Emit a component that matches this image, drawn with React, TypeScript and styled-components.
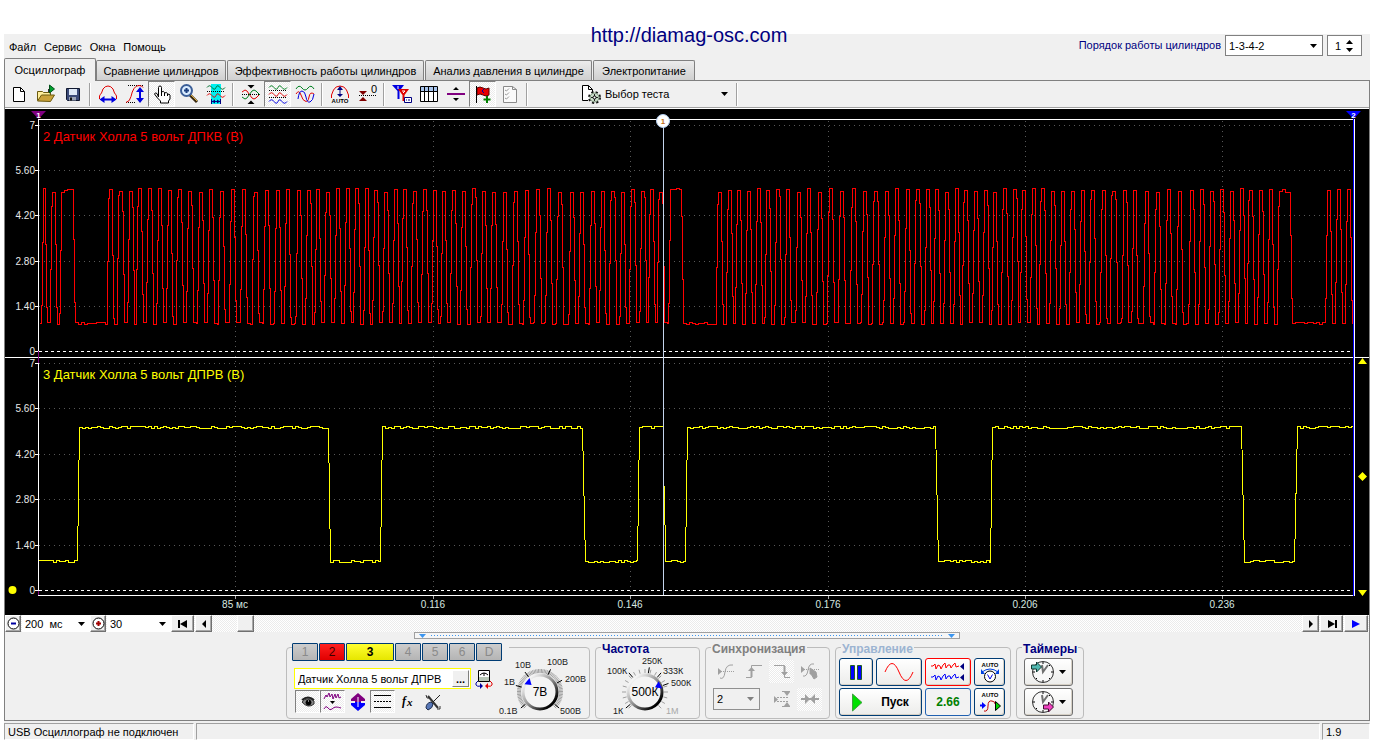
import React from "react";
import styled, { createGlobalStyle, css } from "styled-components";

const FACE = "#f0f0f0";
const NAVY = "#000080";
const UI = '"Liberation Sans", Arial, sans-serif';

const dither = css`
  background: repeating-conic-gradient(#ffffff 0% 25%, #ebebeb 0% 50%) 0 0 / 2px 2px;
`;

const Global = createGlobalStyle`
  *, *::before, *::after { box-sizing: border-box; }
  body { margin: 0; background: #fff; font: 11px/14px ${UI}; color: #000; }
  button, input, select { font: inherit; color: inherit; margin: 0; padding: 0; border-radius: 0; }
  svg { display: block; }
`;

/* ---------- window frame ---------- */

const Window = styled.main`
  position: relative;
  padding: 34px 12px 4px 4px;
`;

const SiteLink = styled.a`
  position: absolute;
  top: 23px;
  left: 0;
  right: 4px;
  margin: 0 auto;
  width: max-content;
  font-size: 20px;
  line-height: 24px;
  color: ${NAVY};
  text-decoration: none;
`;

const Header = styled.header`
  display: flex;
  justify-content: space-between;
  height: 24px;
  padding: 1px 8px 0 5px;
  background: ${FACE};
`;

const Menu = styled.nav`
  display: flex;
  gap: 8px;
  padding-top: 5px;
`;

const MenuItem = styled.a`
  color: #000;
  text-decoration: none;
`;

const OrderBar = styled.div`
  display: flex;
  gap: 4px;
  height: 21px;
`;

const OrderLabel = styled.label`
  color: ${NAVY};
  line-height: 21px;
`;

const Tabs = styled.div`
  display: flex;
  align-items: flex-end;
  gap: 1px;
  height: 22px;
  background: ${FACE};
`;

const Tab = styled.button<{ $w: number; $active?: boolean }>`
  width: ${(p) => p.$w}px;
  height: ${(p) => (p.$active ? 23 : 20)}px;
  margin-bottom: ${(p) => (p.$active ? -1 : 0)}px;
  margin-right: ${(p) => (p.$active ? -1 : 0)}px;
  border: 1px solid #808080;
  border-bottom: 0;
  border-radius: 2px 2px 0 0;
  background: ${(p) => (p.$active ? FACE : "linear-gradient(#ececec, #cfcfcf)")};
  white-space: nowrap;
  z-index: 1;
`;

const Panel = styled.section`
  border: 1px solid #808080;
  background: ${FACE};
`;

/* ---------- toolbar ---------- */

const Toolbar = styled.div`
  display: flex;
  align-items: center;
  height: 28px;
  border-bottom: 1px solid #fff;
  box-shadow: inset 0 -1px #a0a0a0;
  padding-bottom: 1px;
`;

const Tool = styled.button<{ $down?: boolean }>`
  display: grid;
  place-items: center;
  width: 27px;
  height: 26px;
  border: 1px solid transparent;
  background: none;
  ${(p) =>
    p.$down &&
    css`
      ${dither}
      border-color: #808080 #fff #fff #808080;
    `}
`;

const Sep = styled.i`
  width: 2px;
  height: 23px;
  margin: 0 3px;
  border-left: 1px solid #a0a0a0;
  border-right: 1px solid #fff;
`;

const TestPicker = styled.div`
  display: flex;
  align-items: center;
  gap: 1px;
  padding-left: 50px;
`;

/* ---------- drop-downs ---------- */

const SelectBox = styled.span<{ $w: number; $frame?: string; $bg?: string; $h?: number }>`
  display: flex;
  align-items: center;
  width: ${(p) => p.$w}px;
  height: ${(p) => p.$h ?? 21}px;
  padding-right: 5px;
  border: ${(p) => (p.$frame ? `1px solid ${p.$frame}` : 0)};
  background: ${(p) => p.$bg ?? "#fff"};
  select {
    flex: 1;
    min-width: 0;
    height: 100%;
    padding-left: 3px;
    border: 0;
    background: none;
    appearance: none;
  }
`;

const Caret = ({ up, color = "#000" }: { up?: boolean; color?: string }) => (
  <svg width="7" height="4" viewBox="0 0 7 4" aria-hidden="true">
    <path d={up ? "M0 4h7L3.500 0z" : "M0 0h7L3.500 4z"} fill={color} />
  </svg>
);

type DropProps = { id?: string; label?: string; w: number; h?: number; value: string; frame?: string; bg?: string; caret?: string };
const Drop = ({ id, label, w, h, value, frame, bg, caret }: DropProps) => (
  <SelectBox $w={w} $h={h} $frame={frame} $bg={bg}>
    <select id={id} aria-label={label} defaultValue={value}>
      <option value={value}>{value}</option>
    </select>
    <Caret color={caret} />
  </SelectBox>
);

const Spinner = styled.span`
  display: flex;
  align-items: center;
  width: 35px;
  height: 21px;
  border: 1px solid #808080;
  background: #fff;
  input {
    width: 18px;
    padding-left: 7px;
    border: 0;
    background: none;
    outline: 0;
  }
`;

const SpinButtons = styled.span`
  display: grid;
  gap: 4px;
  button {
    height: 4px;
    border: 0;
    background: none;
  }
`;

/* ---------- icons ---------- */

const Ico = ({ w = 20, h = 20, children }: { w?: number; h?: number; children: React.ReactNode }) => (
  <svg width={w} height={h} viewBox={`0 0 ${w} ${h}`} fill="none" stroke="#000" overflow="visible" aria-hidden="true">
    {children}
  </svg>
);

const iconFont = { fontFamily: UI, fontWeight: 700, fontSize: 6 };

const Mesh = ({ y, c }: { y: number; c: string }) => (
  <path d={`M1 ${y + 1.5}q2.500-3.500 5 0t4 0t4 0t5 0`} stroke={c} />
);

const NewIcon = () => (
  <Ico>
    <path d="M4.500 3.500h7l4 4v10h-11z" fill="#fff" />
    <path d="M11.500 3.500v4h4" />
  </Ico>
);
const OpenIcon = () => (
  <Ico>
    <path d="M1.500 16.500v-9h5l1 1h7v3" fill="#ffef9c" stroke="#6b5a10" />
    <path d="M1.500 17l4-6h13l-4 6.500z" fill="#c9a23a" stroke="#6b5a10" />
    <path d="M12.500 8V5" stroke="#303030" />
    <path d="M13.500 1v8l5-4z" fill="#00a030" stroke="#005018" />
  </Ico>
);
const SaveIcon = () => (
  <Ico>
    <path d="M3.500 4.500h13v12h-12l-1-1z" fill="#3b4a78" stroke="#101830" />
    <path d="M6 5h8v6H6z" fill="#dfe9f7" stroke="none" />
    <path d="M6 13h7v3.500H6z" fill="#9aa3b5" stroke="none" />
    <path d="M7 13.500h2v3H7z" fill="#111" stroke="none" />
  </Ico>
);
const WidthIcon = () => (
  <Ico>
    <path d="M1.500 15v-3q1-2 2-3l1.500-4q2-3 5-3t5 3l1.500 4q1 1 2 3v3" stroke="#e00000" />
    <path d="M4 15.500h12" stroke="#0000e0" strokeWidth="2" />
    <path d="M1.500 15.500l5-3.500v7zM18.500 15.500l-5-3.500v7z" fill="#0000e0" stroke="none" />
  </Ico>
);
const HeightIcon = () => (
  <Ico>
    <path d="M3 1.500h16M1 18.500h9" strokeDasharray="1 1" />
    <path d="M1 18.500q4-1 5-6t3-8q2-3 5-3t4 2" stroke="#e00000" />
    <path d="M15 6v10" stroke="#0000e0" strokeWidth="2" />
    <path d="M15 3l4 5h-8zM15 19l4-5h-8z" fill="#0000e0" stroke="none" />
  </Ico>
);
const HandIcon = () => (
  <Ico>
    <path
      d="M6.500 13V3.500q0-1.500 1.500-1.500t1.500 1.500V9V8q2-1.500 3 .500V9q2-1.200 3 .5v1q2-1 2.500.5v4l-1.500 2v2h-8v-2l-3-3-3-4q.5-2 2.500-.5z"
      fill="#fff"
    />
    <path d="M9.500 9v3M12.500 9v3M15.500 10v2" />
  </Ico>
);
const ZoomIcon = () => (
  <Ico>
    <path d="M11 11l7 7" stroke="#3a2a10" strokeWidth="3" />
    <path d="M12 11l6 6" stroke="#e0b040" />
    <circle cx="7.500" cy="6.500" r="5.500" fill="#d9ecff" stroke="#3c5f98" strokeWidth="2" />
    <path d="M5 6.500h5M7.500 4v5" stroke="#1c3f80" strokeWidth="2" />
  </Ico>
);
const BandIcon = () => (
  <Ico>
    <path d="M5 0h10v20H5z" fill="#00f0f0" stroke="none" />
    <Mesh y={2} c="#007030" />
    <path d="M1 7.500h18" strokeDasharray="1 1" />
    <Mesh y={10} c="#e00000" />
    <path d="M6 17.500h8M5.500 15v5M14.500 15v5" stroke="#000080" />
    <path d="M6 17.500l3-2v4zM14 17.500l-3-2v4z" fill="#000080" stroke="none" />
  </Ico>
);
const CrossIcon = () => (
  <Ico>
    <path d="M6.500 1h7L10 4.500zM6.500 20h7L10 16.500z" fill="#000" stroke="none" />
    <path d="M1 10.500h18" strokeDasharray="1 1" />
    <path d="M1 8l3-2q2 0 4 4l3 4q2 2 4 0l4-4" stroke="#e00000" />
    <path d="M1 13l3 2q2 0 4-4l3-4q2-2 4 0l4 4" stroke="#008020" />
  </Ico>
);
const TripleIcon = () => (
  <Ico>
    <Mesh y={2} c="#008020" />
    <path d="M1 6.500h18M1 13.500h18" strokeDasharray="1 1" />
    <Mesh y={9} c="#e00000" />
    <Mesh y={16} c="#0000e0" />
  </Ico>
);
const OverlayIcon = () => (
  <Ico>
    <path d="M1 5q3-5 6-1t6 0 6 1" stroke="#008020" />
    <path d="M1 10q3-5 5 1t4 6q3 2 4-4t5-3" stroke="#e00000" />
    <path d="M3 15q1-8 4-8t4 6t4 5 4-8" stroke="#0000e0" />
  </Ico>
);
const AutoIcon = () => (
  <Ico>
    <path d="M1.500 14v-3l2-5q2-4 6.500-4t6.500 4l2 5v3" stroke="#e00000" />
    <path d="M10 4v8" stroke="#000080" />
    <path d="M10 2l3 4H7zM10 13l3-3H7z" fill="#000080" stroke="none" />
    <text x="10" y="19" textAnchor="middle" fill="#000" stroke="none" {...iconFont}>AUTO</text>
  </Ico>
);
const ZeroIcon = () => (
  <Ico>
    <path d="M2 7h8L6 11zM2 17h8l-4-4z" fill="#800000" stroke="none" />
    <path d="M2 11.500h17" strokeDasharray="1 1" />
    <text x="14" y="9" fill="#000" stroke="none" fontFamily={UI} fontSize="11">0</text>
  </Ico>
);
const FilterIcon = () => (
  <Ico>
    <path d="M0 1h12L7.500 7v8h-2V7z" fill="#0000e0" stroke="none" />
    <path d="M6 5h11l-4.500 6v6h-2v-6z" fill="#e00000" stroke="none" />
    <path d="M6 2v3M10 7h3l-2 2" stroke="#fff" />
    <path d="M12.500 13.500h7v5h-7z" fill="#fff" stroke="#000080" />
    <path d="M14 16h1M16 16h2" stroke="#000080" />
  </Ico>
);
const TableIcon = () => (
  <Ico>
    <path d="M1.500 2.500h17v15h-17z" fill="#fff" />
    <path d="M2 3h16v4H2z" fill="#a8c4ec" stroke="none" />
    <path d="M1 7.500h18M5.500 3v14M9.500 3v14M14.500 3v14" />
  </Ico>
);
const SplitIcon = () => (
  <Ico>
    <path d="M1 10h18" stroke="#800080" strokeWidth="2" />
    <path d="M7 6h6l-3-3zM7 14h6l-3 3z" fill="#000" stroke="none" />
  </Ico>
);
const FlagIcon = () => (
  <Ico>
    <path d="M4 4q3-2 6 0t6 0v7q-3 2-6 0t-6 0z" fill="#e80000" stroke="#600000" />
    <path d="M3.500 2v17" />
    <path d="M11 5l-2 2 2 2" stroke="#0000a0" />
    <path d="M14 12v7M10.500 15.500h7" stroke="#008000" strokeWidth="2" />
  </Ico>
);
const ListIcon = () => (
  <Ico>
    <path d="M3.500 2.500h9l4 3v13h-13z" fill="#fafafa" stroke="#8a8a8a" />
    <path d="M12.500 2.500v3h4" stroke="#8a8a8a" />
    <path d="M5 6l1.500 1L9 4.500M5 10l1.500 1L9 8.500M5 14l1.500 1L9 12.500" stroke="#999" />
  </Ico>
);
const TestIcon = () => (
  <Ico>
    <path d="M1.500 1.500h6l4 4v5l-4 6h-6z" fill="#fff" stroke="none" />
    <path d="M7 16.500H1.500v-15h6l4 4v3M7.500 1.500v4h4" />
    <circle cx="13.500" cy="13.500" r="5" stroke="#111" strokeWidth="3" strokeDasharray="2 2" />
    <circle cx="13.500" cy="13.500" r="4.500" fill="#c9dcc9" stroke="#7c947c" />
    <path d="M10 13.500h7M13.500 10v7" stroke="#222" />
    <circle cx="13.500" cy="13.500" r="1.500" fill="#fff" />
  </Ico>
);

/* ---------- oscillogram ---------- */

const Scope = styled.div`
  display: flex;
  height: 506px;
  background: #000;
`;

const PlotSvg = styled.svg`
  flex: 1;
  min-width: 0;
  height: 506px;
  overflow: visible;
`;

const OX = 38;
const OY = 109;
const SPAN = 1316;
const pct = (x: number) => `${((x - OX) / SPAN) * 100}%`;

/* repeatable noise in the range 0..1 */
const noise = (n: number) => {
  const v = Math.sin(n * 12.9898) * 43758.5453;
  return v - Math.floor(v);
};

const tooth = (c: number): [number, number] => [c - 2, c + 1];

const crankPeaks: Array<[number, number]> = [
  [43, 45], [52, 55], [61, 73],
  ...[111, 121, 131, 140, 150, 160, 170, 180, 190, 201, 211, 222, 233, 244, 256, 267, 278, 288, 299, 309, 318, 328,
    338, 348, 357, 367, 376, 386, 396, 405, 415, 425, 435, 444, 454, 464, 474, 484, 494, 505, 516, 527, 538, 549,
    560, 572, 582, 593, 603, 613, 623, 633, 643, 652, 661].map(tooth),
  [670, 681],
  ...[720, 730, 739, 749, 759, 768, 778, 788, 799, 809, 820, 831, 842, 854, 865, 876, 887, 897, 908, 918, 928, 937,
    947, 957, 966, 976, 986, 995, 1005, 1015, 1024, 1034, 1043, 1053, 1063, 1073, 1083, 1093, 1104, 1114, 1125, 1135,
    1147, 1158, 1169, 1180, 1192, 1202, 1212, 1222, 1232, 1242, 1251, 1261, 1271].map(tooth),
  [1279, 1290], [1327, 1330], [1337, 1340], [1347, 1350],
];

const level = (from: number, to: number, base: number, amp: number) => {
  let d = "";
  for (let x = from; x < to; x += 3) {
    d += `V${base + Math.round((noise(x) - 0.5) * amp)}H${Math.min(x + 3, to)}`;
  }
  return d;
};

const crankPath = () => {
  const hi = 190.5 - OY;
  const lo = 323.5 - OY;
  let d = `M1.500 ${lo}`;
  let at = 1.5;
  crankPeaks.forEach(([a, b]) => {
    const l = a - OX + 0.5;
    const r = b - OX + 0.5;
    const rise = Math.round(noise(a) * 60);
    const fall = Math.round(noise(b + 7) * 60);
    d += level(at, l - 2, lo, 3);
    d += `V${lo - 5 - rise}H${l - 1}V${hi + 65 - rise}H${l}`;
    d += level(l, r, hi, 4);
    d += `V${hi + 5 + fall}H${r + 1}V${lo - 65 + fall}H${r + 2}`;
    at = r + 2;
  });
  return d + level(at, 1315, lo, 2);
};

const camPath = () => {
  const hi = 427.5 - OY;
  const lo = 561.5 - OY;
  const steps: Array<[number, number, number]> = [
    [38, 77, lo], [79, 328, hi], [330, 380, lo], [382, 582, hi], [585, 637, lo], [639, 662, hi], [665, 685, lo],
    [687, 935, hi], [938, 990, lo], [992, 1241, hi], [1244, 1294, lo], [1297, 1353, hi],
  ];
  let d = "";
  steps.forEach(([a, b, y], i) => {
    d += `${i ? "L" : "M"}${a - OX + 0.5} ${y}` + level(a - OX + 0.5, b - OX + 0.5, y, 3);
    if (b === 662) d += `M626.500 ${486 - OY}`;
  });
  return d;
};

const bands = [
  { ys: [125, 170, 215, 261, 306, 351], title: "2 Датчик Холла 5 вольт ДПКВ (В)", ty: 141, color: "#ff0000" },
  { ys: [363, 408, 454, 499, 545, 590], title: "3 Датчик Холла 5 вольт ДПРВ (В)", ty: 379, color: "#ffff00" },
];
const volts = ["7", "5.60", "4.20", "2.80", "1.40", "0"];
const times: Array<[number, string]> = [
  [235, "85 мс"], [433, "0.116"], [630, "0.146"], [828, "0.176"], [1025, "0.206"], [1222, "0.236"],
];

const Gutter = styled.svg<{ $w: number }>`
  flex: none;
  width: ${(p) => p.$w}px;
  height: 506px;
`;

const Oscillogram = () => (
  <Scope>
    <Gutter $w={33} aria-hidden="true">
      {bands.map((b) =>
        b.ys.map((y, i) => (
          <g key={y}>
            <text x="30" y={y - OY + 4} fill="#e8e8e8" textAnchor="end" fontFamily={UI} fontSize="10">{volts[i]}</text>
            <rect x="30" y={y - OY} width="3" height="1" fill="#fff" />
          </g>
        )),
      )}
      <rect y={357 - OY} width="33" height="1" fill="#fff" />
      <circle cx="7.500" cy={590 - OY} r="4" fill="#ff0" />
    </Gutter>
    <PlotSvg role="img" aria-label="Осциллограмма">
      {bands.map((b) =>
        b.ys.map((y, i) => (
          <line
            key={y}
            x1="1"
            x2="100%"
            y1={y - OY + 0.5}
            y2={y - OY + 0.5}
            stroke={i === 5 ? "#fff" : "#585858"}
            strokeDasharray={i === 5 ? "3 3" : "1 4"}
          />
        )),
      )}
      {times.map(([x, t]) => (
        <svg key={t} x={pct(x)} overflow="visible">
          <line x1="0.500" x2="0.500" y1="12" y2="486" stroke="#585858" strokeDasharray="1 4" />
          <rect x="0" y="487" width="1" height="3" fill="#aaa" />
          <text y={499} fill="#d8e8e0" textAnchor="middle" fontFamily={UI} fontSize="10">{t}</text>
        </svg>
      ))}
      <svg width="100%" height="506" viewBox={`0 0 ${SPAN} 506`} preserveAspectRatio="none" fill="none">
        <path d={crankPath()} stroke="#f00" vectorEffect="non-scaling-stroke" shapeRendering="crispEdges" />
        <path d={camPath()} stroke="#ff0" vectorEffect="non-scaling-stroke" shapeRendering="crispEdges" />
      </svg>
      {bands.map((b) => (
        <text key={b.ty} x="5" y={b.ty - OY} fill={b.color} fontFamily={UI} fontSize="13">{b.title}</text>
      ))}
      <rect x="0" y={119 - OY} width="100%" height="1" fill="#fff" />
      <rect x="0" y={357 - OY} width="100%" height="1" fill="#fff" />
      <rect x="0" y={595 - OY} width="100%" height="1" fill="#fff" />
      <rect x="0" y={119 - OY} width="1" height="477" fill="#fff" />
      <rect x="0" y={351 - OY} width="1" height="12" fill="#800080" />
      <rect x="0" y={591 - OY} width="1" height="4" fill="#800080" />
      <path d="M-7 2h15L.5 10z" fill="#800080" />
      <text x="0.500" y="9" fill="#fff" textAnchor="middle" fontFamily={UI} fontSize="8" fontWeight="700">1</text>
      <svg x="100%" overflow="visible">
        <rect x="-1" y={119 - OY} width="1" height="477" fill="#0000ff" />
        <path d="M-8 2h15L-.5 10z" fill="#0000ff" />
        <text x="-0.500" y="9" fill="#fff" textAnchor="middle" fontFamily={UI} fontSize="8" fontWeight="700">2</text>
      </svg>
      <svg x={pct(663)} overflow="visible">
        <rect x="0" y="11" width="1" height="475" fill="#c4d4ec" />
        <circle cx="0" cy="12" r="6.500" fill="#fff" stroke="#b0ccf0" />
        <text x="0" y="15" fill="#c07020" textAnchor="middle" fontFamily={UI} fontSize="8" fontWeight="700">1</text>
      </svg>
    </PlotSvg>
    <Gutter $w={15} aria-hidden="true">
      <rect y={119 - OY} width="1" height="477" fill="#fff" />
      <rect y={357 - OY} width="15" height="1" fill="#fff" />
      <path d="M4 255h9l-4.500-6zM8.500 363l4.500 4.500-4.500 4.500-4.500-4.500zM4 481h9l-4.500 6z" fill="#ff0" />
    </Gutter>
  </Scope>
);

/* ---------- scroll row ---------- */

const ScrollRow = styled.div`
  display: flex;
  height: 17px;
  ${dither}
`;

const StepButton = styled.button<{ $w: number }>`
  display: grid;
  place-items: center;
  flex: none;
  width: ${(p) => p.$w}px;
  height: 17px;
  margin-right: 1px;
  border: 1px solid;
  border-color: #fff #707070 #707070 #fff;
  box-shadow: inset -1px -1px #a8a8a8;
  background: ${FACE};
`;

const Scroll = styled.input`
  flex: 1;
  min-width: 0;
  height: 17px;
  appearance: none;
  background: none;
  &::-webkit-slider-thumb {
    appearance: none;
    width: 17px;
    height: 17px;
    border: 1px solid;
    border-color: #fff #707070 #707070 #fff;
    box-shadow: inset -1px -1px #a8a8a8;
    background: ${FACE};
  }
`;

/* ---------- lower control deck ---------- */

const Splitter = styled.button`
  display: flex;
  align-items: center;
  gap: 5px;
  width: 40%;
  height: 7px;
  margin: 0 auto;
  padding: 0 4px;
  border: 1px solid #a0a0a0;
  background: #f6f6f6;
  i {
    flex: 1;
    height: 1px;
    background: repeating-linear-gradient(90deg, #3c96f0 0 1px, transparent 1px 3px);
  }
`;

const Deck = styled.div`
  display: flex;
  justify-content: center;
  gap: 5px;
  padding: 8px 4px 1px 0;
`;

const Group = styled.section<{ $w: number }>`
  position: relative;
  display: flex;
  width: ${(p) => p.$w}px;
  height: 72px;
  border: 1px solid #bcbcbc;
  border-radius: 4px;
`;

const GroupTitle = styled.h2<{ $color: string }>`
  position: absolute;
  top: -6px;
  left: 5px;
  margin: 0;
  padding: 0 1px;
  font-size: 12px;
  line-height: 14px;
  font-weight: 700;
  background: ${FACE};
  color: ${(p) => p.$color};
`;

const ChannelColumn = styled.div`
  flex: none;
  width: 210px;
  margin: -5px -6px 0 5px;
`;

const ChannelTabs = styled.div`
  display: flex;
  gap: 1px;
  width: 217px;
  background: ${FACE};
`;

const Channel = styled.button<{ $tone?: "red" | "yellow" }>`
  flex: ${(p) => (p.$tone === "yellow" ? "0 0 48px" : "0 0 26px")};
  height: 18px;
  border: 1px solid #003c74;
  border-radius: 1px;
  font-size: 12px;
  font-weight: ${(p) => (p.$tone === "yellow" ? 700 : 400)};
  color: ${(p) => (p.$tone === "yellow" ? "#000" : p.$tone === "red" ? "#400000" : "#8a8a8a")};
  background: ${(p) =>
    p.$tone === "yellow"
      ? "linear-gradient(#ffff30, #e6e600)"
      : p.$tone === "red"
        ? "linear-gradient(#ff2020, #e00000)"
        : "linear-gradient(#cdcdcd, #b4b4b4)"};
`;

const NameRow = styled.div`
  display: flex;
  align-items: center;
  gap: 4px;
  margin: 7px 0 1px 2px;
`;

const NameBox = styled.div`
  display: flex;
  flex: 0 0 177px;
  height: 21px;
  padding: 1px;
  border: 1px solid #ff0;
  background: #fff;
  input {
    flex: 1;
    min-width: 0;
    padding-left: 2px;
    border: 0;
    outline: 0;
    background: none;
  }
`;

const MoreButton = styled.button`
  width: 17px;
  border: 1px solid;
  border-color: #fff #808080 #808080 #fff;
  background: ${FACE};
  font-weight: 700;
  line-height: 8px;
`;

const Plain = styled.button`
  border: 0;
  background: none;
`;

const IconRow = styled.div`
  display: flex;
  margin-left: 3px;
`;

const SmallTool = styled.button<{ $down?: boolean; $flat?: boolean }>`
  display: grid;
  place-items: center;
  width: 25px;
  height: 23px;
  border: 1px solid transparent;
  background: none;
  ${(p) =>
    p.$down &&
    css`
      ${dither}
      border-color: ${p.$flat ? "transparent" : "#808080 #fff #fff #808080"};
    `}
`;

const Dial = styled.div`
  flex: none;
  padding-top: 6px;
`;

type Mark = [number, number, string, boolean?];
type KnobProps = { label: string; w: number; cx: number; value: string; pointer: number; majors: number[]; marks: Mark[]; dense: number };
const Knob = ({ label, w, cx, value, pointer, majors, marks, dense }: KnobProps) => {
  const cy = 38;
  const ray = (deg: number, a: number, b: number) => {
    const s = Math.sin((deg * Math.PI) / 180);
    const c = -Math.cos((deg * Math.PI) / 180);
    return { x1: cx + s * a, y1: cy + c * a, x2: cx + s * b, y2: cy + c * b };
  };
  const minors = Array.from({ length: dense + 1 }, (_, i) => -135 + (270 / dense) * i);
  const id = `rim-${w}`;
  return (
    <Dial role="slider" aria-label={label} aria-valuetext={value} aria-valuenow={pointer}>
      <svg width={w} height="64" viewBox={`0 0 ${w} 64`} fontFamily={UI}>
        <defs>
          <linearGradient id={id} x1="0" y1="0" x2="1" y2="1">
            <stop offset="0.150" stopColor="#f4f4f4" />
            <stop offset="0.500" stopColor="#909090" />
            <stop offset="0.850" stopColor="#000" />
          </linearGradient>
        </defs>
        {minors.map((m) => (
          <line key={m} {...ray(m, 19, 23)} stroke="#a0a0a0" />
        ))}
        {majors.map((m) => (
          <line key={m} {...ray(m, 19, 25)} stroke="#000" />
        ))}
        <circle cx={cx} cy={cy} r="17" fill="#f4f4f4" stroke={`url(#${id})`} strokeWidth="3" />
        <text x={cx} y={cy + 4} textAnchor="middle" fontSize="12">{value}</text>
        <path d="M-4-3h8l-4 6z" fill="#0000ff" transform={`rotate(${pointer} ${cx} ${cy}) translate(${cx} ${cy - 14})`} />
        {marks.map(([x, y, t, off]) => (
          <text key={t} x={x} y={y} fontSize="9" fill={off ? "#a8a8a8" : "#202020"}>{t}</text>
        ))}
      </svg>
    </Dial>
  );
};

const SyncGrid = styled.div`
  display: grid;
  grid-template-columns: 28px 28px 28px 28px;
  grid-template-rows: 24px 24px;
  row-gap: 4px;
  align-items: center;
  padding: 11px 0 0 7px;
`;

const SyncSelect = styled.div`
  grid-column: span 2;
`;

const ControlGrid = styled.div`
  display: grid;
  grid-template-columns: 34px 46px 46px 31px;
  grid-template-rows: 28px 28px;
  gap: 2px 3px;
  padding: 10px 0 0 3px;
`;

const Command = styled.button<{ $edge?: string; $wide?: boolean; $soft?: boolean }>`
  display: flex;
  align-items: center;
  justify-content: center;
  gap: ${(p) => (p.$wide ? 18 : 4)}px;
  grid-column: span ${(p) => (p.$wide ? 2 : 1)};
  border: 1px solid ${(p) => p.$edge ?? "#003c74"};
  border-radius: 3px;
  box-shadow: ${(p) => (p.$soft ? "none" : "inset -1px -1px #d6d0c5")};
  background: ${(p) => (p.$soft ? "#f2f2f2" : "linear-gradient(#ffffff, #ececea)")};
  font-size: 12px;
  font-weight: 700;
  color: ${(p) => (p.$soft ? "#008000" : "#000")};
`;

const TimerGrid = styled.div`
  display: grid;
  grid-template: 28px 28px / 49px;
  gap: 2px;
  padding: 10px 0 0 7px;
`;

const Clock = ({ out }: { out?: boolean }) => (
  <Ico w={24} h={24}>
    <circle cx="12" cy="12" r="10.500" fill="#f8f8f8" stroke="#303030" />
    <path d="M11 5l1 7 5-7" stroke="#707070" strokeWidth="2" />
    <path d="M12 2v2M22 12h-2M12 22v-2M2 12h2M19 5l-1 1M19 19l-1-1M5 19l1-1" />
    {out ? (
      <path d="M12.500 15h5v-3l5 5-5 5v-3h-5z" fill="#f040c0" stroke="#401030" />
    ) : (
      <path d="M.5 5h5V2l5 5-5 5V9h-5z" fill="#50b8b0" stroke="#103830" />
    )}
  </Ico>
);

/* ---------- status bar ---------- */

const Status = styled.footer`
  display: flex;
  gap: 2px;
  height: 19px;
  padding-top: 2px;
  background: ${FACE};
`;

const StatusPane = styled.div<{ $w?: number }>`
  flex: ${(p) => (p.$w ? `0 0 ${p.$w}px` : "1")};
  height: 17px;
  padding-left: 3px;
  border: 1px solid;
  border-color: #a0a0a0 #fff #fff #a0a0a0;
  line-height: 16px;
`;

const G = "#a0a0a0";

export default function App() {
  return (
    <Window>
      <Global />
      <Header>
        <Menu>
          {["Файл", "Сервис", "Окна", "Помощь"].map((m) => (
            <MenuItem href="#" key={m}>{m}</MenuItem>
          ))}
        </Menu>
        <OrderBar>
          <OrderLabel htmlFor="order">Порядок работы цилиндров</OrderLabel>
          <Drop id="order" w={98} value="1-3-4-2" frame="#808080" />
          <Spinner>
            <input aria-label="Номер цилиндра" defaultValue="1" />
            <SpinButtons>
              <button aria-label="Больше"><Caret up /></button>
              <button aria-label="Меньше"><Caret /></button>
            </SpinButtons>
          </Spinner>
        </OrderBar>
      </Header>
      <Tabs role="tablist">
        <Tab role="tab" aria-selected $w={92} $active>Осциллограф</Tab>
        <Tab role="tab" $w={130}>Сравнение цилиндров</Tab>
        <Tab role="tab" $w={197}>Эффективность работы цилиндров</Tab>
        <Tab role="tab" $w={167}>Анализ давления в цилиндре</Tab>
        <Tab role="tab" $w={102}>Электропитание</Tab>
      </Tabs>
      <Panel>
        <Toolbar>
          <Tool aria-label="Новый"><NewIcon /></Tool>
          <Tool aria-label="Открыть"><OpenIcon /></Tool>
          <Tool aria-label="Сохранить"><SaveIcon /></Tool>
          <Sep />
          <Tool aria-label="Ширина"><WidthIcon /></Tool>
          <Tool aria-label="Высота"><HeightIcon /></Tool>
          <Tool aria-label="Рука" $down><HandIcon /></Tool>
          <Tool aria-label="Лупа"><ZoomIcon /></Tool>
          <Tool aria-label="Выделение"><BandIcon /></Tool>
          <Sep />
          <Tool aria-label="Совместить"><CrossIcon /></Tool>
          <Tool aria-label="Раздельно" $down><TripleIcon /></Tool>
          <Tool aria-label="Наложение"><OverlayIcon /></Tool>
          <Sep />
          <Tool aria-label="Авто"><AutoIcon /></Tool>
          <Tool aria-label="Ноль"><ZeroIcon /></Tool>
          <Sep />
          <Tool aria-label="Маркеры"><FilterIcon /></Tool>
          <Tool aria-label="Таблица"><TableIcon /></Tool>
          <Tool aria-label="Разделитель"><SplitIcon /></Tool>
          <Tool aria-label="Метка" $down><FlagIcon /></Tool>
          <Tool aria-label="Список"><ListIcon /></Tool>
          <Sep />
          <TestPicker>
            <TestIcon />
            <Drop label="Тест" w={131} value="Выбор теста" bg="none" />
          </TestPicker>
          <Sep />
        </Toolbar>
        <Oscillogram />
        <ScrollRow>
          <StepButton $w={16} aria-label="Уменьшить">
            <Ico w={13} h={13}><circle cx="6.500" cy="6.500" r="5.500" fill="#fff" /><path d="M4 6.500h5" stroke="#0000a0" strokeWidth="2" /></Ico>
          </StepButton>
          <Drop label="Развёртка" w={68} h={17} value={"200\u00a0 мс"} />
          <StepButton $w={16} aria-label="Увеличить">
            <Ico w={13} h={13}><circle cx="6.500" cy="6.500" r="5.500" fill="#fff" /><path d="M4 6.500h5M6.500 4v5" stroke="#a00000" strokeWidth="2" /></Ico>
          </StepButton>
          <Drop label="Масштаб" w={64} h={17} value="30" />
          <StepButton $w={23} aria-label="В начало">
            <Ico w={10} h={8}><path d="M1 0v8" strokeWidth="2" /><path d="M2 4l7-4v8z" fill="#000" stroke="none" /></Ico>
          </StepButton>
          <StepButton $w={17} aria-label="Назад">
            <Ico w={4} h={8}><path d="M0 4l4-4v8z" fill="#000" stroke="none" /></Ico>
          </StepButton>
          <Scroll type="range" aria-label="Прокрутка" min={0} max={1000} defaultValue={22} />
          <StepButton $w={17} aria-label="Вперёд">
            <Ico w={4} h={8}><path d="M4 4L0 0v8z" fill="#000" stroke="none" /></Ico>
          </StepButton>
          <StepButton $w={23} aria-label="В конец">
            <Ico w={10} h={8}><path d="M9 0v8" strokeWidth="2" /><path d="M8 4L1 0v8z" fill="#000" stroke="none" /></Ico>
          </StepButton>
          <StepButton $w={24} aria-label="Воспроизвести">
            <Ico w={8} h={8}><path d="M8 4L0 0v8z" fill="#00f" stroke="none" /></Ico>
          </StepButton>
        </ScrollRow>
        <Splitter aria-label="Свернуть панель">
          <Caret color="#3c96f0" />
          <i />
          <Caret color="#3c96f0" />
        </Splitter>
        <Deck>
          <Group $w={304} aria-label="Канал">
            <ChannelColumn>
              <ChannelTabs>
                <Channel>1</Channel>
                <Channel $tone="red">2</Channel>
                <Channel $tone="yellow">3</Channel>
                <Channel>4</Channel>
                <Channel>5</Channel>
                <Channel>6</Channel>
                <Channel>D</Channel>
              </ChannelTabs>
              <NameRow>
                <NameBox>
                  <input aria-label="Имя канала" defaultValue="Датчик Холла 5 вольт ДПРВ" />
                  <MoreButton aria-label="Выбрать">...</MoreButton>
                </NameBox>
                <Plain aria-label="Датчик">
                  <Ico w={19} h={20}>
                    <path d="M3.500 1.500h11v11h-11z" fill="#fff" />
                    <path d="M4 8h10v4H4z" fill="#b8c8b8" stroke="none" />
                    <path d="M5 6q4-4 8 0M9 4v3" />
                    <path d="M3 12q-3 2-2 4t5 1" stroke="#0000a0" />
                    <path d="M15 12q3 2 2 4t-5 1" stroke="#e00000" />
                    <path d="M5 14v6l3-3z" fill="#0000a0" stroke="none" />
                    <path d="M13 14v6l-3-3z" fill="#e00000" stroke="none" />
                  </Ico>
                </Plain>
              </NameRow>
              <IconRow>
                <SmallTool $down aria-label="Видимость">
                  <Ico w={14} h={12}>
                    <path d="M1 6q5-6 12-1v3q-6 5-12-2z" fill="#888" stroke="#333" />
                    <circle cx="7.500" cy="6.500" r="2.500" fill="#000" />
                    <path d="M1 4q6-5 12 0" stroke="#222" strokeWidth="2" />
                    <path d="M7 5h1" stroke="#fff" />
                  </Ico>
                </SmallTool>
                <SmallTool $down aria-label="Сглаживание">
                  <Ico w={19} h={19}>
                    <path d="M1 7l2-4 1 2 2-4 1 4 2-3 1 5 2-5 1 4 2-4 1 4 2-1" stroke="#800080" />
                    <path d="M7 9h5l-2.500 3z" fill="#000" stroke="none" />
                    <path d="M1 17q2-4 4-1t4 1 4-2 5 1" stroke="#800080" />
                  </Ico>
                </SmallTool>
                <SmallTool aria-label="Сдвиг">
                  <Ico w={16} h={18}>
                    <path d="M8 0l7 6v2h-4v1H5V8H1V6z" fill="#800080" stroke="none" />
                    <path d="M8 18l7-6v-2h-4V9H5v1H1v2z" fill="#0000ff" stroke="none" />
                    <path d="M8 4v10" stroke="#fff" />
                  </Ico>
                </SmallTool>
                <SmallTool $down aria-label="Линии">
                  <Ico w={17} h={15}>
                    <path d="M0 1.500h17M0 13.500h17" />
                    <path d="M0 7.500h17" strokeDasharray="2 1" />
                  </Ico>
                </SmallTool>
                <SmallTool aria-label="Функция">
                  <Ico w={16} h={17}>
                    <text x="2" y="12" fill="#000" stroke="none" fontFamily="Liberation Serif, serif" fontStyle="italic" fontWeight="700" fontSize="12">f</text>
                    <text x="7" y="13" fill="#000" stroke="none" fontFamily="Liberation Serif, serif" fontStyle="italic" fontWeight="700" fontSize="11">x</text>
                  </Ico>
                </SmallTool>
                <SmallTool aria-label="Настройка">
                  <Ico w={16} h={16}>
                    <path d="M3 2l10 12" stroke="#333" strokeWidth="2" />
                    <path d="M1 1l1 3 3 0M12 15h3v-3" stroke="#333" />
                    <path d="M15 1L8 8" stroke="#222" />
                    <path d="M1 14q0-5 5-6l2 2q0 4-5 6z" fill="#5878b8" stroke="#203050" />
                  </Ico>
                </SmallTool>
              </IconRow>
            </ChannelColumn>
            <Knob
              label="Диапазон напряжения" w={91} cx={44} value="7В" pointer={-50} dense={70}
              majors={[-130, -75, -37, 25, 62, 130]}
              marks={[[3, 60, "0.1В"], [8, 31, "1В"], [19, 14, "10В"], [51, 11, "100В"], [69, 28, "200В"], [64, 60, "500В"]]}
            />
          </Group>
          <Group $w={105}>
            <GroupTitle $color={NAVY}>Частота</GroupTitle>
            <Knob
              label="Частота" w={96} cx={49} value="500К" pointer={65} dense={18}
              majors={[-130, -40, 10, 40, 70]}
              marks={[[17, 60, "1К"], [11, 20, "100К"], [46, 10, "250К"], [67, 20, "333К"], [75, 32, "500К"], [70, 60, "1М", true]]}
            />
          </Group>
          <Group $w={125}>
            <GroupTitle $color="#808080">Синхронизация</GroupTitle>
            <SyncGrid>
              <SmallTool aria-label="Фронт любой">
                <Ico w={18} h={17}><path d="M2 8.500h15" stroke={G} strokeDasharray="1 1" /><path d="M1 5v7l4-3.500z" fill={G} stroke="none" /><path d="M3 15q4 2 5-6t8-7" stroke={G} /></Ico>
              </SmallTool>
              <SmallTool aria-label="По фронту">
                <Ico w={18} h={17}><path d="M1 14.500h5.500v-12H17" stroke={G} /><path d="M3 8l3.500-4L10 8z" fill={G} stroke="none" /><path d="M6.500 7v7" stroke={G} strokeWidth="2" /></Ico>
              </SmallTool>
              <SmallTool aria-label="По спаду" $down $flat>
                <Ico w={18} h={17}><path d="M1 2.500h10.500v12H17" stroke={G} /><path d="M8 9l3.500 4L15 9z" fill={G} stroke="none" /><path d="M11.500 3v8" stroke={G} strokeWidth="2" /></Ico>
              </SmallTool>
              <SmallTool aria-label="Вручную">
                <Ico w={20} h={19}><path d="M2 7.500h17" stroke={G} strokeDasharray="1 1" /><path d="M1 4v7l4-3.500z" fill={G} stroke="none" /><path d="M3 14q4 1 5-6t6-6" stroke={G} /><path d="M10 6v6h1l3 5 3-2-1-5z" fill={G} stroke={G} /></Ico>
              </SmallTool>
              <SyncSelect>
                <Drop label="Канал синхронизации" w={47} h={22} value="2" frame="#909090" bg="#f0f0f0" caret="#808080" />
              </SyncSelect>
              <SmallTool aria-label="Уровень">
                <Ico w={18} h={18}><path d="M1 6v7l4-3.500z" fill={G} stroke="none" /><path d="M4 7.500h11M4 11.500h11" stroke={G} strokeDasharray="2 1" /><path d="M9 1.500h8M9 16.500h8" stroke={G} /><path d="M11 2h6l-3 4zM11 16h6l-3-4z" fill={G} stroke="none" /></Ico>
              </SmallTool>
              <SmallTool aria-label="Центр" $down $flat>
                <Ico w={18} h={12}><path d="M0 6h18" stroke={G} strokeWidth="2" /><path d="M4 1v10l5-5zM14 1v10L9 6z" fill={G} stroke="none" /></Ico>
              </SmallTool>
            </SyncGrid>
          </Group>
          <Group $w={176}>
            <GroupTitle $color="#9cb4d2">Управление</GroupTitle>
            <ControlGrid>
              <Command aria-label="Пауза">
                <Ico w={12} h={15}><path d="M.5.5h4v14h-4zM7.500.5h4v14h-4z" fill="#0000ff" stroke="#206020" /></Ico>
              </Command>
              <Command aria-label="Синус">
                <Ico w={30} h={18}><path d="M1 9Q8-8 15 9t14 0" stroke="#f00" /></Ico>
              </Command>
              <Command $edge="#ff0000" aria-label="Непрерывно">
                <Ico w={34} h={20}>
                  <path d="M0 4l2 0 2-2 1 5 2-4 2 1 1 3 2-4 2-2 1 5 2-3 2 0 1 3 2-3 2-2 1 4 3-1" stroke="#f00" />
                  <path d="M0 15l2 0 2-2 1 5 2-4 2 1 1 3 2-4 2-2 1 5 2-3 2 0 1 3 2-3 2-2 1 4 3-1" stroke="#00f" />
                  <path d="M33 1v7l-4-3.500zM33 12v7l-4-3.500z" fill="#000080" stroke="none" />
                </Ico>
              </Command>
              <Command aria-label="Авто">
                <Ico w={26} h={24}>
                  <text x="13" y="7" textAnchor="middle" fill="#000" stroke="none" {...iconFont}>AUTO</text>
                  <path d="M5 12q8-6 16 0" stroke="#0040e0" />
                  <path d="M4 9v5h4zM22 9v5h-4z" fill="#0040e0" stroke="none" />
                  <circle cx="13" cy="16.500" r="5.500" fill="#fff" />
                  <path d="M10.500 14.500L13 19l2.500-4.500" stroke="#0000e0" />
                </Ico>
              </Command>
              <Command $wide>
                <Ico w={11} h={19}><path d="M.5 1v17L10 9.500z" fill="#00e000" stroke="#40a040" /></Ico>
                Пуск
              </Command>
              <Command $soft $edge="#2060b0">2.66</Command>
              <Command aria-label="Авто пуск">
                <Ico w={26} h={24}>
                  <text x="13" y="7" textAnchor="middle" fill="#000" stroke="none" {...iconFont}>AUTO</text>
                  <path d="M7 21q4 1 4-5t4-5 3 3" stroke="#c00000" />
                  <path d="M3 15.500h4" stroke="#00f" strokeWidth="2" />
                  <path d="M5 12v7l4-3.500z" fill="#00f" stroke="none" />
                  <path d="M18.500 11.500v9l5-4.500z" fill="#00d000" />
                </Ico>
              </Command>
            </ControlGrid>
          </Group>
          <Group $w={68}>
            <GroupTitle $color={NAVY}>Таймеры</GroupTitle>
            <TimerGrid>
              <Command $edge="#707070" aria-label="Таймер пуска"><Clock /><Caret /></Command>
              <Command $edge="#707070" aria-label="Таймер остановки"><Clock out /><Caret /></Command>
            </TimerGrid>
          </Group>
        </Deck>
      </Panel>
      <Status>
        <StatusPane $w={190}>USB Осциллограф не подключен</StatusPane>
        <StatusPane />
        <StatusPane $w={48}>1.9</StatusPane>
      </Status>
      <SiteLink href="http://diamag-osc.com">http://diamag-osc.com</SiteLink>
    </Window>
  );
}
